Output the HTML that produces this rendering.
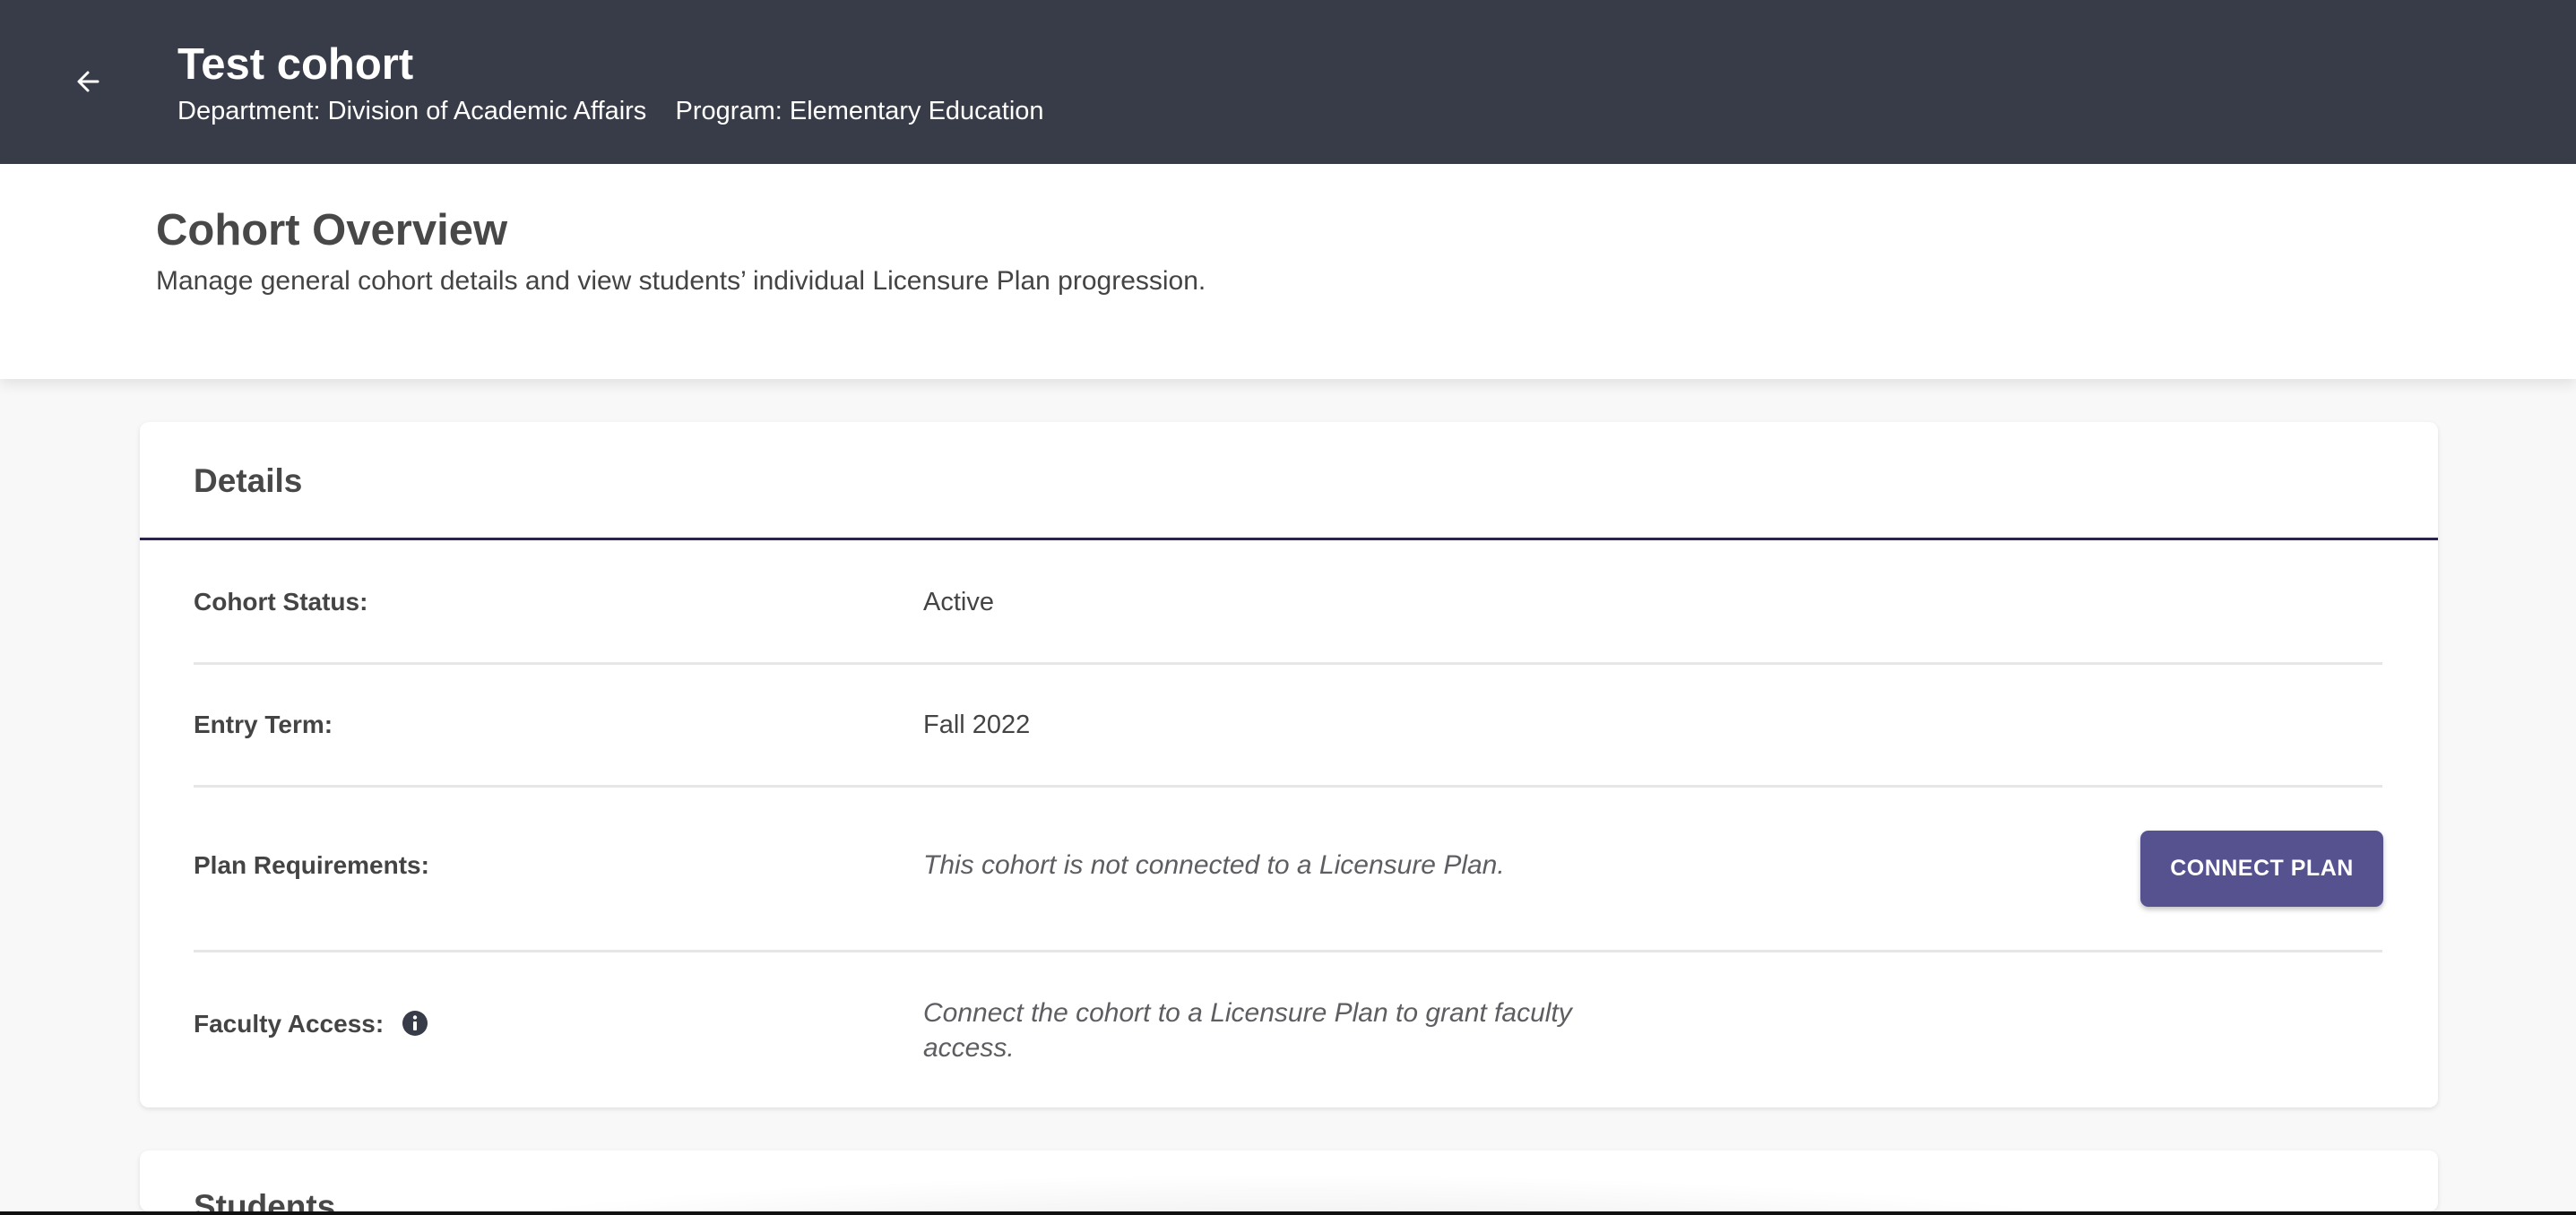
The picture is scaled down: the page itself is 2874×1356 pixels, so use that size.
<!DOCTYPE html>
<html><head><meta charset="utf-8"><style>
*{margin:0;padding:0;box-sizing:border-box}
html,body{width:2874px;height:1356px;overflow:hidden}
body{background:#f8f8f8;font-family:"Liberation Sans",sans-serif;position:relative;color:#444}
.hdr{position:absolute;left:0;top:0;width:2874px;height:183px;background:#383c48;color:#fff}
.abs{position:absolute;white-space:nowrap}
.top{position:absolute;left:0;top:183px;width:2874px;height:240px;background:#fff;box-shadow:0 6px 14px rgba(0,0,0,0.09)}
.card{position:absolute;left:156px;width:2564px;background:#fff;border-radius:10px;box-shadow:0 2px 6px rgba(0,0,0,0.1)}
.lbl{font-weight:bold;font-size:28px;color:#444}
.val{font-size:29px;color:#444}
.it{font-size:30px;color:#5e5e62;font-style:italic}
.line{position:absolute;left:60px;width:2442px;height:3px;background:#e6e6e6}
</style></head><body>
<div class="hdr">
<svg class="abs" style="left:84px;top:77px" width="28" height="28" viewBox="0 0 28 28"><path d="M25 14H5M14 4L4 14L14 24" stroke="#fff" stroke-width="3" fill="none" stroke-linecap="round" stroke-linejoin="round"/></svg>
<div class="abs" style="left:198px;top:44px;font-size:49px;font-weight:bold">Test cohort</div>
<div class="abs" style="left:198px;top:108px;font-size:29px">Department: Division of Academic Affairs&nbsp;&nbsp;&nbsp;&nbsp;Program: Elementary Education</div>
</div>
<div class="top">
<div class="abs" style="left:174px;top:46px;font-size:49px;font-weight:bold;color:#484848">Cohort Overview</div>
<div class="abs" style="left:174px;top:114px;font-size:30px;color:#444">Manage general cohort details and view students’ individual Licensure Plan progression.</div>
</div>
<div class="card" style="top:471px;height:765px">
<div class="abs" style="left:60px;top:45px;font-size:37px;font-weight:bold;color:#484848">Details</div>
<div class="abs" style="left:0;top:129px;width:2564px;height:3px;background:#2b2448"></div>
<div class="abs lbl" style="left:60px;top:185px">Cohort Status:</div>
<div class="abs val" style="left:1030px;top:185px;left:874px">Active</div>
<div class="line" style="top:268px"></div>
<div class="abs lbl" style="left:60px;top:322px">Entry Term:</div>
<div class="abs val" style="left:874px;top:322px">Fall 2022</div>
<div class="line" style="top:405px"></div>
<div class="abs lbl" style="left:60px;top:479px">Plan Requirements:</div>
<div class="abs it" style="left:874px;top:478px">This cohort is not connected to a Licensure Plan.</div>
<div class="abs" style="left:2232px;top:456px;width:271px;height:85px;background:#56528f;border-radius:9px;box-shadow:0 3px 6px rgba(0,0,0,0.25);color:#fff;font-weight:bold;font-size:25px;text-align:center;line-height:85px;letter-spacing:0.5px">CONNECT PLAN</div>
<div class="line" style="top:589px"></div>
<div class="abs lbl" style="left:60px;top:656px">Faculty Access:</div>
<svg class="abs" style="left:292px;top:656px" width="30" height="30" viewBox="0 0 30 30"><circle cx="15" cy="15" r="14" fill="#383c48"/><rect x="13" y="13" width="4" height="10" rx="1" fill="#fff"/><circle cx="15" cy="8.5" r="2.2" fill="#fff"/></svg>
<div class="abs it" style="left:874px;top:640px;line-height:39px">Connect the cohort to a Licensure Plan to grant faculty<br>access.</div>
</div>
<div class="card" style="top:1284px;height:68px;overflow:hidden">
<div class="abs" style="left:200px;top:25px;width:2160px;height:200px;border-radius:100px;background:radial-gradient(ellipse at 50% 50%,rgba(0,0,0,0.1),rgba(0,0,0,0) 70%)"></div>
<div class="abs" style="left:60px;top:42px;font-size:37px;font-weight:bold;color:#484848">Students</div>
</div>
<div class="abs" style="left:0;top:1352px;width:2874px;height:4px;background:#111"></div>
</body></html>
